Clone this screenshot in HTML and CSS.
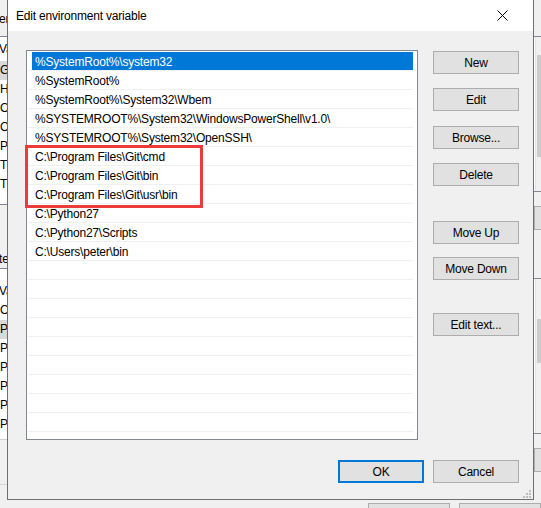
FILE: index.html
```html
<!DOCTYPE html>
<html>
<head>
<meta charset="utf-8">
<title>Edit environment variable</title>
<link rel="stylesheet" href="styles.css">
</head>
<body>
<div class="desktop">
  <div class="back back-left">
    <div class="b-label">er</div>
    <div class="b-list b-list1">
      <div class="b-head">Va</div>
      <div class="b-row b-sel">Gl</div>
      <div class="b-row">HO</div>
      <div class="b-row">Or</div>
      <div class="b-row">Or</div>
      <div class="b-row">Pa</div>
      <div class="b-row">TE</div>
      <div class="b-row">TM</div>
    </div>
    <div class="b-label2">te</div>
    <div class="b-list b-list2">
      <div class="b-head2">Va</div>
      <div class="b-row">OS</div>
      <div class="b-row b-sel">Pa</div>
      <div class="b-row">PA</div>
      <div class="b-row">PR</div>
      <div class="b-row">PR</div>
      <div class="b-row">PR</div>
      <div class="b-row">PR</div>
    </div>
    <div class="b-sep"></div>
  </div>

  <div class="back back-right">
    <div class="r-top"></div>
    <div class="r-list r-list1">
      <div class="r-col"></div>
      <div class="r-line"></div>
      <div class="r-track"><div class="r-thumb r-thumb1"></div></div>
    </div>
    <div class="r-btn r-btn1"></div>
    <div class="r-list r-list2">
      <div class="r-col"></div>
      <div class="r-line"></div>
      <div class="r-track"><div class="r-thumb r-thumb2"></div></div>
    </div>
    <div class="r-btn r-btn2"></div>
  </div>

  <div class="back back-bottom">
    <div class="bb-btn bb-ok"></div>
    <div class="bb-btn bb-cancel"></div>
  </div>

  <div class="dialog">
    <div class="titlebar">
      <span class="title">Edit environment variable</span>
      <svg class="close" width="11" height="11" viewBox="0 0 11 11"><path d="M0.5 0.5 L10.5 10.5 M10.5 0.5 L0.5 10.5" stroke="#000" stroke-width="1" fill="none"/></svg>
    </div>
    <div class="body">
      <div class="main">
        <div class="list">
          <div class="row sel"><span class="cell">%SystemRoot%\system32</span></div>
          <div class="row"><span class="cell">%SystemRoot%</span></div>
          <div class="row"><span class="cell">%SystemRoot%\System32\Wbem</span></div>
          <div class="row"><span class="cell">%SYSTEMROOT%\System32\WindowsPowerShell\v1.0\</span></div>
          <div class="row"><span class="cell">%SYSTEMROOT%\System32\OpenSSH\</span></div>
          <div class="row"><span class="cell">C:\Program Files\Git\cmd</span></div>
          <div class="row"><span class="cell">C:\Program Files\Git\bin</span></div>
          <div class="row"><span class="cell">C:\Program Files\Git\usr\bin</span></div>
          <div class="row"><span class="cell">C:\Python27</span></div>
          <div class="row"><span class="cell">C:\Python27\Scripts</span></div>
          <div class="row"><span class="cell">C:\Users\peter\bin</span></div>
          <div class="row"><span class="cell"></span></div>
          <div class="row"><span class="cell"></span></div>
          <div class="row"><span class="cell"></span></div>
          <div class="row"><span class="cell"></span></div>
          <div class="row"><span class="cell"></span></div>
          <div class="row"><span class="cell"></span></div>
          <div class="row"><span class="cell"></span></div>
          <div class="row"><span class="cell"></span></div>
          <div class="row"><span class="cell"></span></div>
          <div class="mark"></div>
        </div>
        <div class="side">
          <div class="btn b-new">New</div>
          <div class="btn b-edit">Edit</div>
          <div class="btn b-browse">Browse...</div>
          <div class="btn b-delete">Delete</div>
          <div class="btn b-up">Move Up</div>
          <div class="btn b-down">Move Down</div>
          <div class="btn b-text">Edit text...</div>
        </div>
      </div>
      <div class="footer">
        <div class="btn btn-default">OK</div>
        <div class="btn">Cancel</div>
      </div>
    </div>
    <svg class="grip" width="9" height="9" viewBox="0 0 9 9">
      <rect x="7" y="1" width="2" height="2" fill="#bdbdbd"/>
      <rect x="4" y="4" width="2" height="2" fill="#bdbdbd"/>
      <rect x="7" y="4" width="2" height="2" fill="#bdbdbd"/>
      <rect x="1" y="7" width="2" height="2" fill="#bdbdbd"/>
      <rect x="4" y="7" width="2" height="2" fill="#bdbdbd"/>
      <rect x="7" y="7" width="2" height="2" fill="#bdbdbd"/>
    </svg>
  </div>
</div>
</body>
</html>
```

FILE: styles.css
```css
html, body {
  margin: 0;
  padding: 0;
}
body {
  font-family: "Liberation Sans", Arial, sans-serif;
  font-size: 12px;
  letter-spacing: -0.2px;
  color: #000;
  background: #f0f0f0;
}
.desktop {
  position: relative;
  width: 541px;
  height: 508px;
  overflow: hidden;
  background: #f0f0f0;
}

/* ---------- background window (behind the dialog) ---------- */
.back {
  position: absolute;
  overflow: hidden;
}
.back-left {
  left: 0;
  top: 0;
  width: 7px;
  height: 508px;
  white-space: nowrap;
}
.b-label {
  height: 36px;
  box-sizing: border-box;
  padding-top: 12px;
  line-height: 14px;
  margin-left: -1px;
}
.b-list {
  background: #fff;
  border-top: 1px solid #828790;
  border-bottom: 1px solid #828790;
}
.b-list1 {
  height: 167px;
}
.b-head {
  height: 24px;
  line-height: 24px;
  margin-left: -1px;
}
.b-head2 {
  height: 32px;
  box-sizing: border-box;
  padding-top: 12px;
  line-height: 20px;
  margin-left: -1px;
}
.b-row {
  height: 19px;
  line-height: 19px;
  margin-left: -1px;
  padding-left: 1px;
}
.b-sel {
  background: #d9d9d9;
}
.b-label2 {
  height: 63px;
  box-sizing: border-box;
  padding-top: 47px;
  line-height: 14px;
  margin-left: -1px;
}
.b-list2 {
  height: 170px;
  border-bottom-color: #d0d0d0;
}
.b-sep {
  margin-top: 44px;
  height: 1px;
  background: #d5d5d5;
}

.back-right {
  left: 534px;
  top: 0;
  width: 7px;
  height: 508px;
}
.r-top {
  height: 36px;
}
.r-list {
  display: flex;
  background: #fff;
  border-top: 1px solid #828790;
  border-bottom: 1px solid #828790;
}
.r-list1 {
  height: 154px;
}
.r-list2 {
  height: 154px;
  margin-top: 48px;
}
.r-col {
  width: 1px;
  background: #fff;
}
.r-line {
  width: 1px;
  background: #e3e3e3;
}
.r-track {
  flex: 1;
  background: #f0f0f0;
  display: flex;
  flex-direction: column;
  padding-left: 1px;
}
.r-thumb {
  background: #cdcdcd;
}
.r-thumb1 {
  margin-top: 18px;
  height: 102px;
}
.r-thumb2 {
  margin-top: 40px;
  height: 44px;
}
.r-btn {
  height: 24px;
  box-sizing: border-box;
  border: 1px solid #adadad;
  border-right: none;
  background: #e1e1e1;
}
.r-btn1 {
  margin-top: 14px;
}
.r-btn2 {
  margin-top: 14px;
}

.back-bottom {
  left: 0;
  top: 500px;
  width: 541px;
  height: 8px;
  display: flex;
  padding-left: 368px;
  padding-top: 3px;
  box-sizing: border-box;
  gap: 9px;
}
.bb-btn {
  width: 86px;
  height: 23px;
  box-sizing: border-box;
  border: 1px solid #adadad;
  background: #e1e1e1;
}

/* ---------- dialog ---------- */
.dialog {
  position: absolute;
  left: 7px;
  top: -1px;
  width: 527px;
  height: 501px;
  box-sizing: border-box;
  border: 1px solid #6f6f6f;
  background: #f0f0f0;
  display: flex;
  flex-direction: column;
}
.titlebar {
  height: 31px;
  flex: none;
  background: #fff;
  display: flex;
  align-items: center;
  padding-left: 8px;
  line-height: 14px;
}
.title {
  flex: 1;
}
.close {
  margin-right: 25px;
  display: block;
}
.body {
  flex: 1;
  padding: 19px 14px 0 18px;
  display: flex;
  flex-direction: column;
}
.main {
  display: flex;
  gap: 15px;
}
.list {
  position: relative;
  width: 392px;
  height: 390px;
  box-sizing: border-box;
  border: 1px solid #828790;
  background: #fff;
  padding: 1px 4px 0 1px;
  white-space: nowrap;
}
.row {
  height: 18px;
  border-bottom: 1px solid #f0f0f0;
}
.cell {
  display: block;
  height: 18px;
  line-height: 20px;
  margin-left: 4px;
  padding-left: 3px;
}
.row.sel .cell {
  background: #0078d7;
  color: #fff;
}
.mark {
  position: absolute;
  left: -2px;
  top: 94px;
  width: 178px;
  height: 63px;
  box-sizing: border-box;
  border: 3px solid #ec3b3b;
}
.side {
  width: 86px;
  display: flex;
  flex-direction: column;
  padding-top: 1px;
}
.btn {
  width: 86px;
  height: 23px;
  box-sizing: border-box;
  border: 1px solid #adadad;
  background: #e1e1e1;
  padding-top: 1px;
  line-height: 20px;
  text-align: center;
}
.b-edit { margin-top: 14px; }
.b-browse { margin-top: 15px; }
.b-delete { margin-top: 14px; }
.b-up { margin-top: 35px; }
.b-down { margin-top: 13px; }
.b-text { margin-top: 33px; }
.footer {
  display: flex;
  justify-content: flex-end;
  gap: 9px;
  margin-top: 20px;
}
.btn-default {
  border: 2px solid #0078d7;
  padding-top: 1px;
  line-height: 18px;
}
.grip {
  position: absolute;
  right: 2px;
  bottom: 1px;
}
```
